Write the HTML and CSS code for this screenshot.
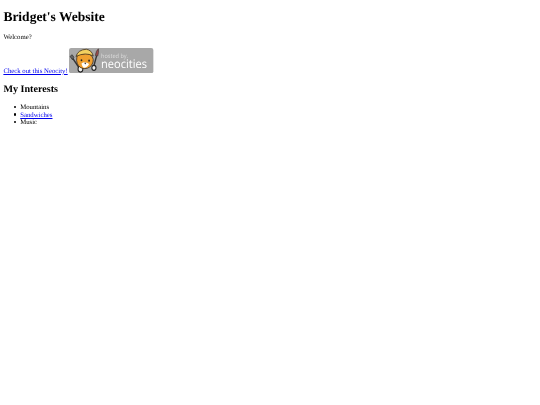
FILE: index.html
```html
<!DOCTYPE html>
<html>
<head>
<meta charset="utf-8">
<title>Bridget's Website</title>
<link rel="stylesheet" href="styles.css">
</head>
<body>
<h1>Bridget's Website</h1>
<p>Welcome?</p>
<p><a href="#">Check out this Neocity!</a>
<svg class="badge" viewBox="0 0 200 60" role="img" aria-label="hosted by neocities">
<rect width="200" height="60" rx="5" fill="#a8a8a8"/>
<g transform="scale(0.82 1)">
<path d="M3 20 L9 16 L14 22 L10 28Z" fill="#666" stroke="#333" stroke-width="2"/>
<path d="M11 25 L30 48" stroke="#333" stroke-width="4"/>
<circle cx="33" cy="50" r="7" fill="#eee" stroke="#222" stroke-width="3"/>
<path d="M72 42 L80 18" stroke="#333" stroke-width="4"/>
<path d="M76 18 Q78 6 85 2 Q87 11 83 19Z" fill="#9a4a4a" stroke="#333" stroke-width="1.5"/>
<circle cx="72" cy="47" r="6" fill="#eee" stroke="#222" stroke-width="3"/>
<path d="M22 30 Q22 14 30 10 L40 14 Q52 10 62 16 Q76 26 66 40 Q54 52 38 48 Q24 44 22 30Z" fill="#f0a030" stroke="#3a2a1a" stroke-width="2"/>
<path d="M20 20 Q26 4 50 3 Q66 5 70 19 Q48 9 20 20Z" fill="#f3d060" stroke="#3a2a1a" stroke-width="2"/>
<path d="M36 37 Q46 30 58 38 Q52 48 42 47 Q38 45 36 37Z" fill="#fff"/>
<circle cx="36" cy="29" r="2.5" fill="#222"/>
<circle cx="58" cy="30" r="2.5" fill="#222"/>
<path d="M44 35 L50 35 L47 39Z" fill="#222"/>
</g>
<text x="76" y="23" textLength="64" lengthAdjust="spacingAndGlyphs" class="badge-small">hosted by.</text>
<text x="76" y="47" textLength="109" lengthAdjust="spacingAndGlyphs" class="badge-large">neocities</text>
</svg></p>
<h2>My Interests</h2>
<ul>
<li>Mountains</li>
<li><a href="#">Sandwiches</a></li>
<li>Music</li>
</ul>
</body>
</html>
```
FILE: styles.css
```css
html {
  background: #fff;
}
body {
  margin: 3.375px;
  font-family: "Liberation Serif", "Times New Roman", serif;
  font-size: 6.75px;
  line-height: 7.6px;
  color: #000;
  text-rendering: geometricPrecision;
  filter: blur(0.2px);
}
h1 {
  font-size: 13.5px;
  line-height: 15.6px;
  margin: 5.5px 0 9.05px;
}
h2 {
  font-size: 10.125px;
  line-height: 11.6px;
  margin: 8.4px 0;
}
p {
  margin: 6.75px 0;
}
ul {
  margin: 6.75px 0;
  padding-left: 16.875px;
  list-style: none;
}
li::before {
  content: "";
  display: inline-block;
  width: 2.2px;
  height: 2.2px;
  margin-left: -6px;
  margin-right: 3.8px;
  border-radius: 50%;
  background: #000;
  vertical-align: 1.2px;
}
a {
  color: #00e;
  text-decoration-thickness: 0.42px;
}
.badge {
  width: 84.4px;
  height: 25.3px;
}
.badge-small {
  font-family: "Open Sans", "Liberation Sans", sans-serif;
  font-size: 14px;
  fill: #dcdcdc;
}
.badge-large {
  font-family: "Open Sans", "Liberation Sans", sans-serif;
  font-size: 28px;
  fill: #fff;
}
```
